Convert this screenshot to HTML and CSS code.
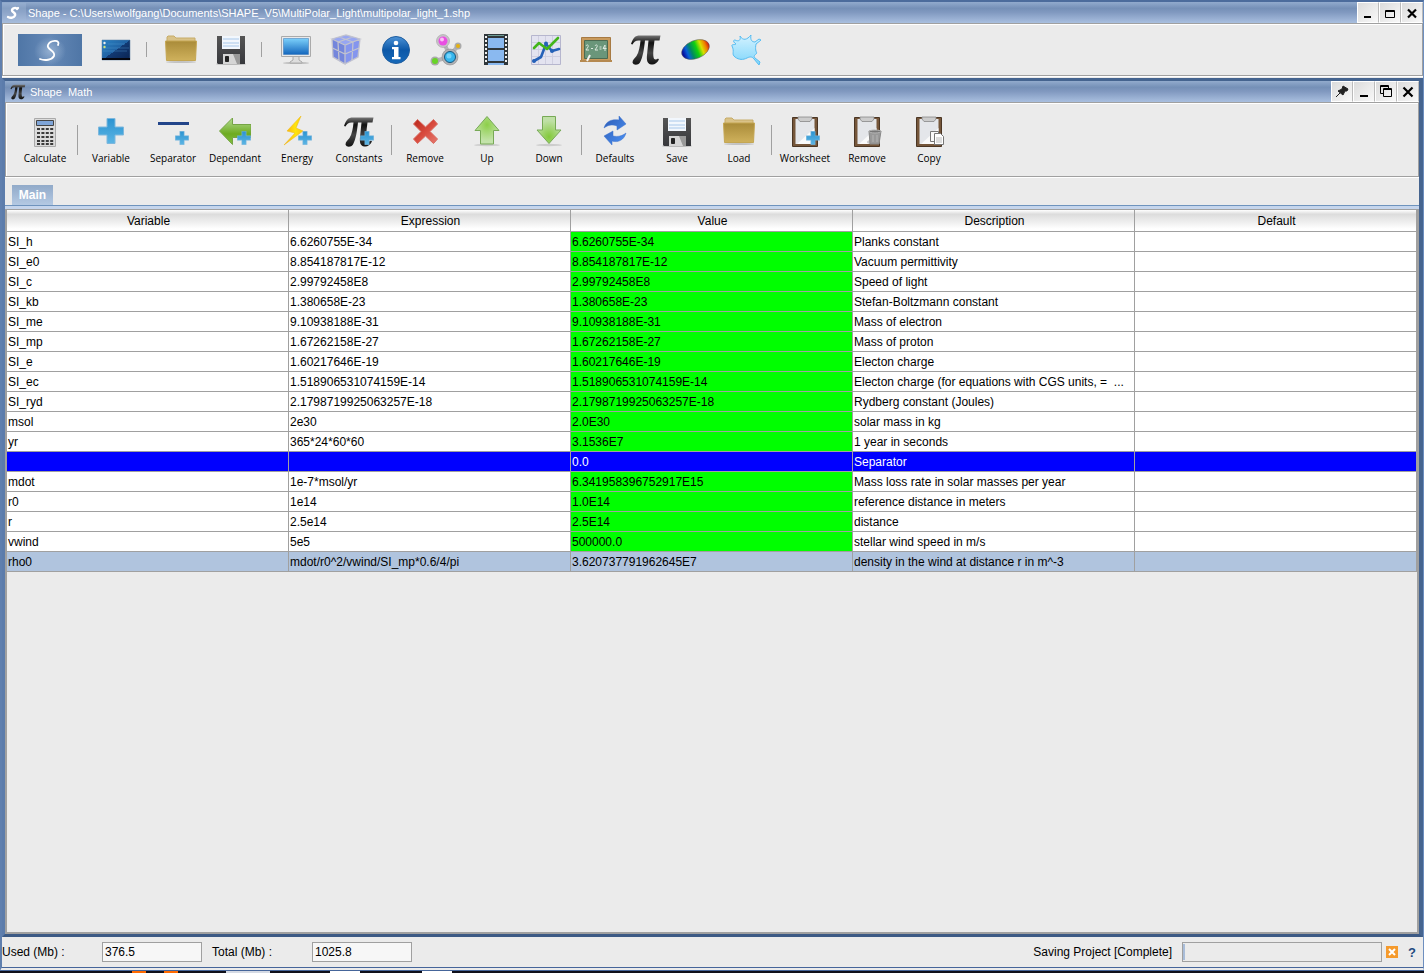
FILE: index.html
```
<!DOCTYPE html>
<html lang="en">
  <head>
    <meta charset="UTF-8" />
    <meta name="viewport" content="width=device-width, initial-scale=1.0" />
    <title>Shape Math</title>
    <link rel="stylesheet" href="styles.css">
  </head>
  <body>
    <!-- shared icons -->
    <svg class="defs" aria-hidden="true">
      <defs>
        <linearGradient id="gFolder" x1="0" y1="0" x2="0" y2="1"><stop offset="0" stop-color="#a98b39" /><stop offset="1" stop-color="#cfb15c" /></linearGradient>
        <linearGradient id="gDisk" x1="0" y1="0" x2="0" y2="1"><stop offset="0" stop-color="#555" /><stop offset="1" stop-color="#37383c" /></linearGradient>
        <linearGradient id="gPlus" x1="0" y1="0" x2="0" y2="1"><stop offset="0" stop-color="#2b93d1" /><stop offset="1" stop-color="#5cb5e4" /></linearGradient>
        <linearGradient id="gPi" x1="0" y1="0" x2="0" y2="1"><stop offset="0" stop-color="#777" /><stop offset="0.25" stop-color="#111" /><stop offset="0.6" stop-color="#444" /><stop offset="1" stop-color="#111" /></linearGradient>
        <linearGradient id="gScreen" x1="0" y1="0" x2="0" y2="1"><stop offset="0" stop-color="#7cd0fa" /><stop offset="1" stop-color="#1366bd" /></linearGradient>
        <linearGradient id="gTerm" x1="0" y1="0" x2="1" y2="1"><stop offset="0" stop-color="#2b83c4" /><stop offset="0.5" stop-color="#2062a3" /><stop offset="0.5" stop-color="#123a74" /><stop offset="1" stop-color="#0a2350" /></linearGradient>
        <linearGradient id="gInfo" x1="0" y1="0" x2="0" y2="1"><stop offset="0" stop-color="#4c92d6" /><stop offset="0.5" stop-color="#0c58a8" /><stop offset="1" stop-color="#1669b9" /></linearGradient>
        <linearGradient id="gRainbow" x1="0" y1="0" x2="1" y2="0"><stop offset="0.05" stop-color="#0810a0" /><stop offset="0.2" stop-color="#0a60d8" /><stop offset="0.35" stop-color="#008a60" /><stop offset="0.55" stop-color="#10d010" /><stop offset="0.72" stop-color="#d8e000" /><stop offset="0.87" stop-color="#f08000" /><stop offset="1" stop-color="#d01010" /></linearGradient>
        <linearGradient id="gSplash" x1="0" y1="0" x2="0" y2="1"><stop offset="0" stop-color="#d4f2ff" /><stop offset="1" stop-color="#7fd6fb" /></linearGradient>
        <linearGradient id="gGreen" x1="0" y1="0" x2="0" y2="1"><stop offset="0" stop-color="#b4dc94" /><stop offset="0.6" stop-color="#6dab20" /><stop offset="1" stop-color="#85c043" /></linearGradient>
        <radialGradient id="gUp" cx="0.5" cy="0.3" r="0.6"><stop offset="0" stop-color="#8dcf4a" /><stop offset="1" stop-color="#c3e3aa" /></radialGradient>
        <radialGradient id="gDown" cx="0.5" cy="0.75" r="0.6"><stop offset="0" stop-color="#83c93b" /><stop offset="1" stop-color="#bfe0a6" /></radialGradient>
        <linearGradient id="gRed" x1="0" y1="0" x2="1" y2="1"><stop offset="0" stop-color="#b8261b" /><stop offset="0.5" stop-color="#d84a3d" /><stop offset="1" stop-color="#e67b70" /></linearGradient>
        <linearGradient id="gBolt" x1="0" y1="0" x2="1" y2="0"><stop offset="0" stop-color="#f9a21a" /><stop offset="0.6" stop-color="#ffe60a" /><stop offset="1" stop-color="#fbc312" /></linearGradient>
        <linearGradient id="gSync" x1="0" y1="0" x2="1" y2="1"><stop offset="0" stop-color="#2c5bb5" /><stop offset="1" stop-color="#4c92f5" /></linearGradient>
        <linearGradient id="gLogo" x1="0" y1="0" x2="1" y2="0"><stop offset="0" stop-color="#4f76a6" /><stop offset="0.5" stop-color="#6488b6" /><stop offset="1" stop-color="#4f76a6" /></linearGradient>
        <radialGradient id="gGlow"><stop offset="0" stop-color="#a8c0dc" stop-opacity="0.7" /><stop offset="1" stop-color="#a8c0dc" stop-opacity="0" /></radialGradient>
      </defs>
      <symbol id="plus" viewBox="0 0 26 26">
        <path d="M9 0.5h8v8.500h8.500v8h-8.500v8.500h-8v-8.500h-8.500v-8h8.500z" fill="url(#gPlus)" stroke="#7fb8dd" />
      </symbol>
      <symbol id="folder" viewBox="0 0 32 32">
        <ellipse cx="16" cy="28" rx="15" ry="1" fill="#999" opacity="0.5" />
        <path d="M2 10V3l1-1h6l2 2h19v5z" fill="#d9c288" stroke="#c7ac69" />
        <path d="M0.500 7h31l-1 19.500h-29z" fill="url(#gFolder)" stroke="#c4a653" />
      </symbol>
      <symbol id="disk" viewBox="0 0 32 32">
        <ellipse cx="16" cy="30" rx="15" ry="1" fill="#888" opacity="0.5" />
        <path d="M2 2h28v28h-27l-1-1z" fill="url(#gDisk)" />
        <path d="M7 2h18v13h-18z" fill="#f2f7fd" />
        <path d="M8 5h16M8 9h16M8 12h16" stroke="#a9c8ea" />
        <path d="M8 20h17v10h-17z" fill="#d5d5d5" />
        <path d="M10.500 22.500h3v5h-3z" fill="#222" stroke="#222" />
        <path d="M18 20h7v10h-3z" fill="#999" />
      </symbol>
      <symbol id="pi" viewBox="0 0 32 32">
        <path d="M1 10C3 4 5 1.500 10 1.500H30.500l-1 5H24.500C23.500 14 23 19 23.500 23c.5 3 2.500 3 4.500 1.500l1 1C27 29.500 24 31 21.500 30.500 17 30 16.500 26 17 21l1.500-14.500H15C14 15 13 23 10 28.500 8 31.500 3.500 31.500 2.500 28.500 2.500 25.500 5 24 6.500 22 9 18 10 12 10.500 6.500H8.500C5.500 6.500 4 8 2.500 10.500z" fill="url(#gPi)" />
      </symbol>
      <symbol id="board" viewBox="0 0 32 32">
        <path d="M3.500 1.500h25v29h-25z" fill="#75563a" stroke="#4b3624" />
        <path d="M6.500 3h19v25h-19z" fill="#e4e6ea" />
        <path d="M8 28l17.500-16v16z" fill="#fafafa" />
        <path d="M9 1h14v2l-2 2.500h-10l-2-2.500z" fill="#ccc" stroke="#888" stroke-width="0.800" />
      </symbol>
    </svg>

    <div class="window">
      <header class="title-bar">
        <svg class="title-icon" viewBox="0 0 24 20"><path d="M0 0h24v20h-24z" fill="#a3b8d6" opacity="0.4" /><path d="M15 6c-1-2-5-1-5 1.500 0 2 4 2 3 5-1 2-4 3-7 1.500M15 6l1-1" fill="none" stroke="#fff" stroke-width="2.400" stroke-linecap="round" /></svg>
        <span class="title">Shape - C:\Users\wolfgang\Documents\SHAPE_V5\MultiPolar_Light\multipolar_light_1.shp</span>
        <div class="window-buttons">
          <button aria-label="Minimize"><svg viewBox="0 0 20 20"><path d="M6 14h7" stroke="#000" stroke-width="2" /></svg></button>
          <button aria-label="Maximize"><svg viewBox="0 0 20 20"><path d="M5.500 7.500h9v7h-9zM5 8.500h10" fill="none" stroke="#000" /></svg></button>
          <button aria-label="Close"><svg viewBox="0 0 20 20"><path d="M6 6.500l8 8M14 6.500l-8 8" stroke="#000" stroke-width="2.200" /></svg></button>
        </div>
      </header>

      <nav class="main-toolbar">
        <button class="logo-button" aria-label="Shape">
          <svg viewBox="0 0 64 32"><path d="M0 0h64v32h-64z" fill="url(#gLogo)" /><ellipse cx="32" cy="17" rx="16" ry="14" fill="url(#gGlow)" /><path d="M40 11C43 5 32 6 30 11c-2 5 8 5 6 11-2 4-9 5-14 3" fill="none" stroke="#fff" stroke-width="1.800" stroke-linecap="round" /></svg>
        </button>
        <button aria-label="Console">
          <svg viewBox="0 0 32 32"><path d="M2 6h28v20h-28z" fill="url(#gTerm)" stroke="#56799e" stroke-width="0.500" /><path d="M2 24h28v2h-28z" fill="#05070f" /><path d="M3 14h26M3 17h24M8 10h17" stroke="#5ba4d8" stroke-width="0.600" opacity="0.6" /><circle cx="4.500" cy="9" r="1.200" fill="#eee" /><circle cx="4.500" cy="13" r="1.200" fill="#cde37c" /></svg>
        </button>
        <span class="divider"></span>
        <button aria-label="Open"><svg><use href="#folder" /></svg></button>
        <button aria-label="Save"><svg><use href="#disk" /></svg></button>
        <span class="divider"></span>
        <button aria-label="Display">
          <svg viewBox="0 0 32 32"><ellipse cx="16" cy="29" rx="13" ry="1" fill="#bbb" /><path d="M13 22h6v4l3 2v1h-12v-1l3-2z" fill="#ddd" stroke="#aaa" /><path d="M1.500 2.500h29v20h-29z" fill="#e9e9ea" stroke="#aaa" /><path d="M3.500 4.500h25v16h-25z" fill="url(#gScreen)" stroke="#3477b9" stroke-width="0.500" /></svg>
        </button>
        <button aria-label="3D model">
          <svg viewBox="0 0 32 32"><path d="M2 5L16 1l14 4-2 18-14 7L3 23z" fill="#7486dc" /><path d="M2 5L16 1l14 4-14 6z" fill="#97a6f2" /><path d="M15 11l15-6-2 18-13 7z" fill="#8495ee" /><path d="M2 5L16 1l14 4-15 6zM2 5l1 18 12 7V11M30 5l-2 18-13 7M2.500 14L15 20l14-6M8 8l1 18M23 8l-1 18M9 3l14 5M23 3L8 8" fill="none" stroke="#c2c3cf" stroke-width="1.300" /></svg>
        </button>
        <button aria-label="Information">
          <svg viewBox="0 0 32 32"><circle cx="16" cy="16" r="13.500" fill="url(#gInfo)" stroke="#1e5d9f" /><circle cx="16" cy="9" r="2.300" fill="#fff" /><path d="M12 13h6.500v10h2v2.200h-8.500v-2.200h2v-7.800h-2z" fill="#fff" /></svg>
        </button>
        <button aria-label="Particles">
          <svg viewBox="0 0 32 32"><path d="M13 7l7 15M28 12l-9 10M5 27l14-4" stroke="#b4b4b7" stroke-width="4" /><circle cx="13" cy="7" r="6.500" fill="#c6c4c8" stroke="#999" stroke-width="0.500" /><circle cx="20" cy="23" r="8" fill="#b1b1b4" stroke="#888" stroke-width="0.500" /><circle cx="28" cy="12" r="3.500" fill="#aaa" /><circle cx="5" cy="27" r="4.500" fill="#aaa" /><circle cx="13" cy="7" r="4.500" fill="#e94fe2" /><circle cx="12" cy="5.500" r="2" fill="#fac1f5" /><circle cx="20" cy="23" r="5.500" fill="#37b6ed" stroke="#17567d" /><circle cx="19" cy="22" r="2.500" fill="#74d4fb" /><circle cx="28" cy="12" r="2" fill="#e5b110" /><circle cx="5" cy="27" r="3" fill="#68d427" /></svg>
        </button>
        <button aria-label="Film">
          <svg viewBox="0 0 32 32"><path d="M4 0h24v31h-24z" fill="#30373b" /><path d="M8 4h16v10h-16zM8 16h16v11h-16zM8 29h16v2h-16z" fill="#8ab9f0" /><path d="M8 1h16v1h-16z" fill="#6d9c94" /><path d="M6 2v28M26 2v28" stroke="#f1f1f1" stroke-width="2" stroke-dasharray="2 2" /></svg>
        </button>
        <button aria-label="Graph">
          <svg viewBox="0 0 32 32"><path d="M1.500 1.500h29v29h-29z" fill="#e3e3f0" stroke="#b6b6ce" /><path d="M8.500 2v28M15.500 2v28M22.500 2v28M2 8.500h28M2 15.500h28M2 22.500h28" stroke="#cfcfe0" /><path d="M4 27l7-4 5-13 6 7 7-2" fill="none" stroke="#2561b8" stroke-width="2.600" stroke-linecap="round" stroke-linejoin="round" /><path d="M4 14l5-5 8 6L28 4" fill="none" stroke="#43b51a" stroke-width="2.600" stroke-linecap="round" stroke-linejoin="round" /><circle cx="16" cy="9.500" r="2" fill="#2561b8" /><circle cx="22" cy="17" r="2" fill="#2561b8" /><circle cx="4" cy="27" r="2" fill="#2561b8" /></svg>
        </button>
        <button aria-label="Blackboard">
          <svg viewBox="0 0 32 32"><path d="M1.500 3.500h29v24h-29z" fill="#c99a5c" stroke="#a77a43" /><path d="M4.500 6.500h23v18h-23z" fill="#6a967a" stroke="#4c6a51" /><path d="M0 26h32v2h-32z" fill="#b58950" /><path d="M6 12c1-2 3-1 2 1l-2 3h3M11 14.500h2M15 12c1-2 3-1 2 1l-2 3h3M19.500 13h2M19.500 15h2M25 17v-6l-2 3.500h3.500" fill="none" stroke="#dce8de" stroke-width="1" /><path d="M7 27l3-6" stroke="#f4f4f4" stroke-width="2" /></svg>
        </button>
        <button aria-label="Math"><svg><use href="#pi" /></svg></button>
        <button aria-label="Color map">
          <svg viewBox="0 0 32 32"><ellipse cx="15.500" cy="15.500" rx="14.500" ry="9" transform="rotate(-22 15.500 15.500)" fill="url(#gRainbow)" stroke="#555" stroke-width="0.500" /></svg>
        </button>
        <button aria-label="Hydro">
          <svg viewBox="0 0 32 32"><path d="M5 6C9 8 11 6 10 2c3 5 7 4 11-1-1 5 1 7 4 7l4-3 2 1-5 4c-1 5 0 8 1 9-2 2-4 3-2 5l5 4-1 3-5-6c-2-3-5-2-7-1-4 2-8 2-12-1C1 20 5 18 2 12c-1-2 3-1 4-2C3 8 3 6 5 6z" fill="url(#gSplash)" stroke="#55bcf2" /></svg>
        </button>
      </nav>

      <main class="inner-window">
        <header class="title-bar">
          <svg class="pi-icon" viewBox="0 0 32 32"><use href="#pi" width="32" height="32" /></svg>
          <span class="title">Shape &nbsp;Math</span>
          <div class="window-buttons">
            <button aria-label="Pin"><svg viewBox="0 0 20 20"><path d="M11 4l5 3-1 2-2 0-2 4-5-4 4-2zM8 11l-4 4" fill="#222" stroke="#222" /></svg></button>
            <button aria-label="Minimize"><svg viewBox="0 0 20 20"><path d="M6 14h8" stroke="#000" stroke-width="2" /></svg></button>
            <button aria-label="Restore"><svg viewBox="0 0 20 20"><path d="M7.500 11.500h-3v-8h8v3M7.500 6.500h8v8h-8zM4 4.500h9M7 7.500h9" fill="none" stroke="#000" /></svg></button>
            <button aria-label="Close"><svg viewBox="0 0 20 20"><path d="M5.500 5.500l9 9M14.500 5.500l-9 9" stroke="#000" stroke-width="2.200" /></svg></button>
          </div>
        </header>

        <div class="math-toolbar">
          <button>
            <svg viewBox="0 0 32 32"><path d="M5.500 2.500h21v28h-21z" fill="#dcdcdc" stroke="#aaa" /><path d="M7.500 4.500h17v5h-17z" fill="#7fa5d8" stroke="#444" /><path d="M8 13h17M8 17h17M8 21h17M8 25h17M8 28h17" stroke="#3b3b3b" stroke-width="2.200" stroke-dasharray="3 1.400" /></svg>
            Calculate
          </button>
          <span class="divider"></span>
          <button><svg viewBox="0 0 32 32"><use href="#plus" x="3" y="2" width="26" height="26" /></svg>Variable</button>
          <button><svg viewBox="0 0 32 32"><path d="M1 7.500h31" stroke="#22458a" stroke-width="3" /><use href="#plus" x="18" y="15" width="14" height="14" /></svg>Separator</button>
          <button><svg viewBox="0 0 32 32"><path d="M0.500 15L13.500 2v6.500h18.500v13h-18.500v7z" fill="url(#gGreen)" stroke="#75a445" /><use href="#plus" x="18" y="15" width="14" height="14" /></svg>Dependant</button>
          <button><svg viewBox="0 0 32 32"><path d="M20 0L6 15l8 2L3 29l19-14-7-3z" fill="url(#gBolt)" stroke="#f0bd1b" stroke-width="0.600" /><use href="#plus" x="17" y="15" width="14" height="14" /></svg>Energy</button>
          <button><svg viewBox="0 0 32 32"><use href="#pi" width="32" height="32" /><use href="#plus" x="17" y="15" width="14" height="14" /></svg>Constants</button>
          <span class="divider"></span>
          <button><svg viewBox="0 0 32 32"><path d="M8.500 3.500l8 7.500 8-7.500 4 4.500-7.500 7.500 7.500 7.500-4 4.500-8-7.500-8 7.500-4-4.500 7.500-7.500-7.500-7.500z" fill="url(#gRed)" stroke="#d9695e" /></svg>Remove</button>
          <button><svg viewBox="0 0 32 32"><ellipse cx="16" cy="29" rx="13" ry="1.200" fill="#ccc" /><path d="M16 0.500L28 14.500h-5.500v13.500h-13v-13.500h-5.500z" fill="url(#gUp)" stroke="#77a956" /></svg>Up</button>
          <button><svg viewBox="0 0 32 32"><ellipse cx="16" cy="29" rx="13" ry="1.200" fill="#ccc" /><path d="M16 27.500L28 14h-5.500v-13.500h-13v13.500h-5.500z" fill="url(#gDown)" stroke="#77a956" /></svg>Down</button>
          <span class="divider"></span>
          <button><svg viewBox="0 0 32 32"><path d="M5 12C7 5 13 3 20 4V0l7 8-9 6v-4c-5-2-9-1-13 2zM27 17c-2 7-8 10-14 8v4l-8-9 9-5v5c5 1 9 0 13-3z" fill="url(#gSync)" stroke="#3b70cd" stroke-width="0.500" /></svg>Defaults</button>
          <button><svg><use href="#disk" /></svg>Save</button>
          <button><svg><use href="#folder" /></svg>Load</button>
          <span class="divider"></span>
          <button><svg viewBox="0 0 32 32"><use href="#board" width="32" height="32" /><use href="#plus" x="17" y="15" width="14" height="14" /></svg>Worksheet</button>
          <button><svg viewBox="0 0 32 32"><use href="#board" width="32" height="32" /><ellipse cx="21" cy="26" rx="5" ry="2" fill="#aaa" opacity="0.6" /><path d="M18 15h12l-2 13h-9z" fill="#999" stroke="#888" /><ellipse cx="24" cy="15.500" rx="6" ry="1.500" fill="#777" stroke="#b5b5b5" /><path d="M22 19v7M26 19v7" stroke="#b5b5b5" /></svg>Remove</button>
          <button><svg viewBox="0 0 32 32"><use href="#board" width="32" height="32" /><path d="M17.500 15.500h8v10h-8z" fill="#fafafa" stroke="#777" /><path d="M21.500 17.500h6l3 3v8h-9z" fill="#fff" stroke="#777" /><path d="M23 22h6M23 24h6M23 26h6" stroke="#bbb" /></svg>Copy</button>
        </div>

        <div class="tabs">
          <button class="tab">Main</button>
        </div>

        <div class="table-container">
          <table>
            <thead>
              <tr><th>Variable</th><th>Expression</th><th>Value</th><th>Description</th><th>Default</th></tr>
            </thead>
            <tbody>
              <tr><td>SI_h</td><td>6.6260755E-34</td><td class="value">6.6260755E-34</td><td>Planks constant</td><td></td></tr>
              <tr><td>SI_e0</td><td>8.854187817E-12</td><td class="value">8.854187817E-12</td><td>Vacuum permittivity</td><td></td></tr>
              <tr><td>SI_c</td><td>2.99792458E8</td><td class="value">2.99792458E8</td><td>Speed of light</td><td></td></tr>
              <tr><td>SI_kb</td><td>1.380658E-23</td><td class="value">1.380658E-23</td><td>Stefan-Boltzmann constant</td><td></td></tr>
              <tr><td>SI_me</td><td>9.10938188E-31</td><td class="value">9.10938188E-31</td><td>Mass of electron</td><td></td></tr>
              <tr><td>SI_mp</td><td>1.67262158E-27</td><td class="value">1.67262158E-27</td><td>Mass of proton</td><td></td></tr>
              <tr><td>SI_e</td><td>1.60217646E-19</td><td class="value">1.60217646E-19</td><td>Electon charge</td><td></td></tr>
              <tr><td>SI_ec</td><td>1.518906531074159E-14</td><td class="value">1.518906531074159E-14</td><td>Electon charge (for equations with CGS units, = &nbsp;...</td><td></td></tr>
              <tr><td>SI_ryd</td><td>2.1798719925063257E-18</td><td class="value">2.1798719925063257E-18</td><td>Rydberg constant (Joules)</td><td></td></tr>
              <tr><td>msol</td><td>2e30</td><td class="value">2.0E30</td><td>solar mass in kg</td><td></td></tr>
              <tr><td>yr</td><td>365*24*60*60</td><td class="value">3.1536E7</td><td>1 year in seconds</td><td></td></tr>
              <tr class="separator"><td></td><td></td><td>0.0</td><td>Separator</td><td></td></tr>
              <tr><td>mdot</td><td>1e-7*msol/yr</td><td class="value">6.341958396752917E15</td><td>Mass loss rate in solar masses per year</td><td></td></tr>
              <tr><td>r0</td><td>1e14</td><td class="value">1.0E14</td><td>reference distance in meters</td><td></td></tr>
              <tr><td>r</td><td>2.5e14</td><td class="value">2.5E14</td><td>distance</td><td></td></tr>
              <tr><td>vwind</td><td>5e5</td><td class="value">500000.0</td><td>stellar wind speed in m/s</td><td></td></tr>
              <tr class="selected"><td>rho0</td><td>mdot/r0^2/vwind/SI_mp*0.6/4/pi</td><td>3.620737791962645E7</td><td>density in the wind at distance r in m^-3</td><td></td></tr>
            </tbody>
          </table>
        </div>
      </main>

      <footer class="status-bar">
        <label for="used">Used (Mb) :</label>
        <input type="text" id="used" value="376.5" readonly />
        <label for="total">Total (Mb) :</label>
        <input type="text" id="total" value="1025.8" readonly />
        <span class="status">Saving Project [Complete]</span>
        <div class="progress"><div class="progress-fill"></div></div>
        <button class="cancel" aria-label="Cancel"><svg viewBox="0 0 12 12"><path d="M0 0h12v12h-12z" fill="#f59a2c" /><path d="M3 3l6 6M9 3l-6 6" stroke="#fff" stroke-width="2" /></svg></button>
        <button class="help">?</button>
      </footer>
    </div>

    <div class="taskbar">
      <span class="task orange"></span>
      <span class="task orange"></span>
      <span class="task light"></span>
      <span class="task white"></span>
      <span class="task white"></span>
    </div>
  </body>
</html>
```
FILE: styles.css
```
* {
  box-sizing: border-box;
}
body {
  display: flex;
  flex-direction: column;
  height: 100vh;
  margin: 0;
  background-color: #10101a;
  color: #000;
  font-family: "Liberation Sans", Arial, sans-serif;
  font-size: 12px;
}
button {
  padding: 0;
  border: none;
  background: none;
  color: #000;
  font-family: inherit;
}
svg {
  display: block;
}
.defs {
  position: absolute;
  width: 0;
  height: 0;
}
.window {
  display: flex;
  flex-direction: column;
  flex: 1;
  min-height: 0;
  background-color: #ebebeb;
  border: 2px solid #6e8fbf;
  border-top-color: #4c6c9c;
  border-left-color: #5f7fae;
  border-right-width: 1px;
  border-bottom: 4px double #45659a;
}

/* title bars */
.title-bar {
  display: flex;
  align-items: center;
  flex-shrink: 0;
  height: 21px;
  background: linear-gradient(#92abcd, #7590b7 30%, #8199c0 50%, #a9bfdf);
  color: #fff;
  font-size: 11px;
}
.title-icon {
  width: 24px;
  height: 20px;
}
.pi-icon {
  width: 16px;
  height: 16px;
  margin: 0 2px 0 5px;
}
.title {
  flex: 1;
  padding-left: 2px;
  white-space: pre;
}
.window-buttons {
  display: flex;
  height: 21px;
}
.window-buttons button {
  width: 22px;
  border: 1px solid #fff;
  border-right-color: #bbb;
  background: linear-gradient(135deg, #dcdcdc, #f8f8f8);
}
.window-buttons svg {
  width: 20px;
  height: 20px;
}

/* toolbars */
.main-toolbar,
.math-toolbar {
  display: flex;
  align-items: center;
  flex-shrink: 0;
  border: 1px solid #a0a0a0;
  box-shadow: inset 1px 1px #fff, 0 1px #fff;
}
.main-toolbar {
  height: 53px;
  margin-bottom: 2px;
  padding-left: 15px;
}
.main-toolbar button {
  width: 50px;
}
.main-toolbar svg {
  width: 32px;
  height: 32px;
  margin: 0 auto;
}
.main-toolbar .logo-button {
  width: 64px;
  margin-right: 9px;
}
.main-toolbar .logo-button svg {
  width: 64px;
}
.divider {
  width: 1px;
  height: 15px;
  margin: 0 9px 0 5px;
  background-color: #a0a0a0;
}
.math-toolbar {
  height: 75px;
  padding-left: 8px;
}
.math-toolbar button {
  width: 62px;
  padding-top: 2px;
  font-family: "Open Sans", sans-serif;
  font-size: 10px;
  line-height: 14px;
}
.math-toolbar svg {
  width: 32px;
  height: 32px;
  margin: 0 auto 3px;
}
.math-toolbar .divider {
  height: 30px;
  margin: 0 2px 0 1px;
}

.inner-window {
  display: flex;
  flex-direction: column;
  flex: 1;
  min-height: 0;
  border: 3px solid #45648f;
  border-right-width: 4px;
  border-left-color: #5c7cab;
  border-bottom-color: #3c5a85;
}

/* tabs */
.tabs {
  display: flex;
  align-items: flex-end;
  flex-shrink: 0;
  height: 29px;
  padding-left: 7px;
  border-bottom: 1px solid #6e93bd;
}
.tab {
  width: 41px;
  height: 20px;
  background: linear-gradient(#91aac9, #b4c9e3);
  color: #fff;
  font-size: 12px;
  font-weight: bold;
}

/* table */
.table-container {
  flex: 1;
  min-height: 0;
  border: 2px solid #a0a0a0;
  border-top-width: 1px;
  box-shadow: 0 -3px #c5d5ec;
  margin-top: 3px;
}
table {
  width: 100%;
  border-collapse: separate;
  border-spacing: 0;
  table-layout: fixed;
}
th,
td {
  overflow: hidden;
  padding: 0 1px;
  border-right: 1px solid #a0a0a0;
  border-bottom: 1px solid #a0a0a0;
  text-align: left;
  white-space: nowrap;
}
th {
  height: 22px;
  padding-left: 3px;
  background: linear-gradient(#fff, #dcdcdc 20%, #fff 90%);
  font-weight: normal;
  text-align: center;
}
td {
  height: 20px;
  background-color: #fff;
}
.value {
  background-color: #00ff00;
}
.separator td {
  background-color: #0000ff;
  color: #fff;
}
.selected td {
  background-color: #b0c4de;
}

/* status bar */
.status-bar {
  display: flex;
  align-items: center;
  flex-shrink: 0;
  height: 30px;
  padding-right: 7px;
}
.status-bar label {
  width: 100px;
}
.status-bar input {
  width: 100px;
  height: 20px;
  margin-right: 10px;
  padding: 0 2px;
  border: 1px solid #a0a0a0;
  background-color: #f7f7f7;
  font-family: inherit;
  font-size: 12px;
}
.status {
  flex: 1;
  text-align: right;
}
.progress {
  width: 200px;
  height: 20px;
  margin: 0 4px 0 10px;
  border: 1px solid #a0a0a0;
}
.progress-fill {
  width: 2px;
  height: 16px;
  margin-top: 1px;
  background-color: #a9bdd9;
}
.cancel {
  width: 12px;
  height: 12px;
  margin-right: 10px;
}
.help {
  color: #1f4a80;
  font-size: 13px;
  font-weight: bold;
}

/* strip of the desktop under the window */
.taskbar {
  display: flex;
  flex-shrink: 0;
  gap: 18px;
  height: 2px;
  padding-left: 132px;
}
.task {
  width: 30px;
}
.orange {
  width: 14px;
  background-color: #ff6a00;
}
.light {
  width: 44px;
  margin-left: 30px;
  background-color: #d5dae4;
}
.white {
  background-color: #fff;
}
.white:nth-child(4) {
  margin-left: 42px;
}
.white:nth-child(5) {
  margin-left: 44px;
}
```
